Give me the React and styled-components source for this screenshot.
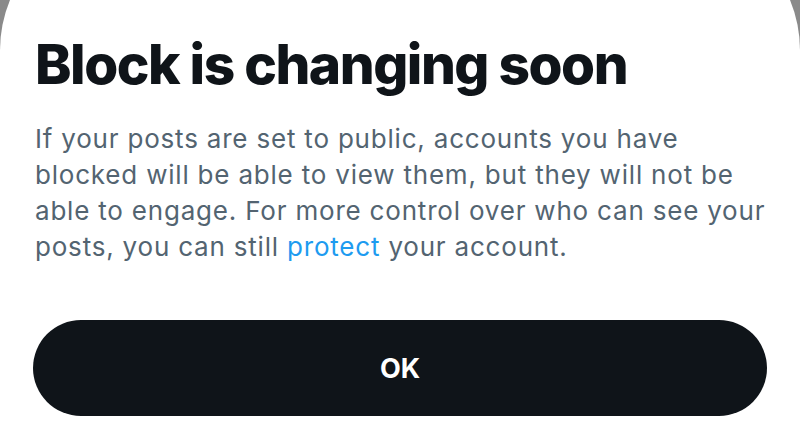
import React from "react";
import styled, { createGlobalStyle } from "styled-components";

const Global = createGlobalStyle`
  html, body {
    margin: 0;
    padding: 0;
    background: #8a8a8a;
    overflow: hidden;
  }
  #root {
    width: 800px;
    height: 447px;
    overflow: hidden;
  }
`;

const Sheet = styled.div`
  box-sizing: border-box;
  width: 800px;
  height: 527px;
  margin-top: -80px;
  padding: 112px 33px 0 35px;
  background: #ffffff;
  border-radius: 130px 130px 0 0;
  display: flex;
  flex-direction: column;
  font-family: Inter, "Liberation Sans", Arial, sans-serif;
`;

const Title = styled.h1`
  margin: 0;
  font-size: 55px;
  line-height: 64px;
  font-weight: 800;
  color: #0f1419;
  letter-spacing: -1.5px;
`;

const Body = styled.p`
  margin: 25px 0 0;
  font-size: 26px;
  line-height: 36px;
  color: #536471;
  letter-spacing: 0.8px;
`;

const Link = styled.span`
  color: #1d9bf0;
`;

const Button = styled.button`
  margin-top: 55px;
  height: 96px;
  width: 734px;
  margin-left: -2px;
  border: none;
  border-radius: 48px;
  background: #0f1419;
  color: #ffffff;
  font-family: Inter, "Liberation Sans", Arial, sans-serif;
  font-size: 27px;
  font-weight: 700;
  cursor: pointer;
`;

export default function App() {
  return (
    <>
      <Global />
      <Sheet>
        <Title>Block is changing soon</Title>
        <Body>
          If your posts are set to public, accounts you have
          <br />
          blocked will be able to view them, but they will not be
          <br />
          able to engage. For more control over who can see your
          <br />
          posts, you can still <Link>protect</Link> your account.
        </Body>
        <Button>OK</Button>
      </Sheet>
    </>
  );
}
